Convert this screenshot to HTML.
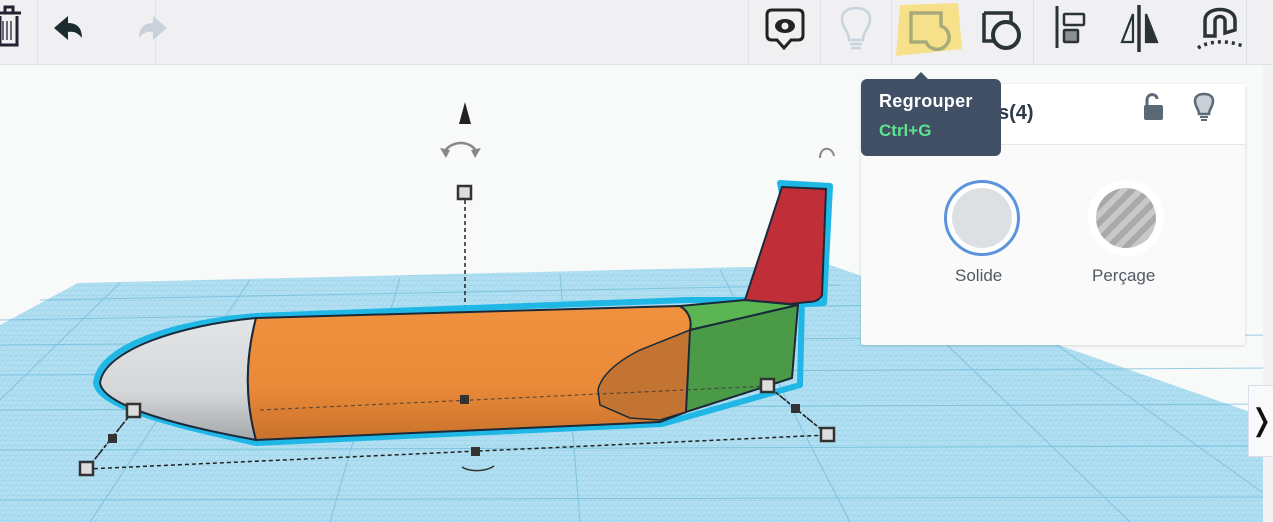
<!DOCTYPE html>
<html><head><meta charset="utf-8"><style>
html,body{margin:0;padding:0;width:1273px;height:522px;overflow:hidden;background:#f8f9f9;font-family:"Liberation Sans",sans-serif}
.tb{position:absolute;left:0;top:0;width:1273px;height:64px;background:#f0f0f2;border-bottom:1px solid #dde2e6}
.sep{position:absolute;top:0;width:1px;height:64px;background:#dde2e6}
.panel{position:absolute;left:861px;top:84px;width:384px;height:261px;background:#fafafa;border-radius:3px;box-shadow:0 1px 3px rgba(0,0,0,.15)}
.ph{position:absolute;left:0;top:0;width:384px;height:60px;border-bottom:1px solid #e3e6e9;background:#fff}
.tip{position:absolute;left:861px;top:79px;width:140px;height:77px;background:#415065;border-radius:6px;color:#fff}
</style></head><body>
<svg width="1273" height="522" style="position:absolute;left:0;top:0">
<defs>
<pattern id="g" width="5" height="5" patternUnits="userSpaceOnUse" patternTransform="skewX(-35)">
<rect width="5" height="5" fill="#b2dff1"/>
<path d="M0 0H5M0 0V5" stroke="#8fcde8" stroke-width="0.8"/>
</pattern>
<linearGradient id="bd" x1="0" y1="0" x2="0" y2="1"><stop offset="0" stop-color="#f0913f"/><stop offset=".6" stop-color="#e98a38"/><stop offset="1" stop-color="#c9722c"/></linearGradient>
<linearGradient id="ns" x1="0" y1="0" x2="0" y2="1"><stop offset="0" stop-color="#e2e4e6"/><stop offset=".6" stop-color="#d5d7d9"/><stop offset="1" stop-color="#a5a8ab"/></linearGradient>
</defs>
<polygon points="0,325 78,283 830,265 1273,420 1273,522 0,522" fill="url(#g)"/>
<g stroke="#6db9d9" stroke-width="1" fill="none" opacity=".7">
<path d="M0,345 L1273,335"/><path d="M0,375 L1273,368"/><path d="M0,410 L1273,404"/><path d="M0,450 L1273,446"/><path d="M0,500 L1273,497"/><path d="M40,300 L840,285"/><path d="M0,320 L900,305"/>
<path d="M120,283 L0,400"/><path d="M250,280 L90,522"/><path d="M400,278 L330,522"/><path d="M560,274 L580,522"/><path d="M720,270 L850,522"/><path d="M880,280 L1130,522"/><path d="M1050,340 L1273,500"/>
</g>
<path d="M87,469 L828,435 L768,386 L134,410 Z" fill="none" stroke="#222" stroke-width="1.5" stroke-dasharray="4,3"/>
<path d="M465,193 L465,400" stroke="#222" stroke-width="1.5" stroke-dasharray="4,3"/>
<path d="M780,183 L830,186 L824,303 L790,305 L745,300 L688,300 L256,316 C180,322 100,345 96,383 C100,410 200,430 256,443 L662,424 L800,385 L802,300 Z" fill="none" stroke="#1fb8e6" stroke-width="6" stroke-linejoin="round"/>
<path d="M256,318 C180,325 104,350 100,383 C104,408 190,428 256,440 C245,400 245,360 256,318Z" fill="url(#ns)" stroke="#1a2a3a" stroke-width="2"/>
<path d="M256,318 L680,306 C690,312 692,322 690,330 L686,412 L660,422 L256,440 C245,400 245,360 256,318Z" fill="url(#bd)" stroke="#1a2a3a" stroke-width="2"/>
<path d="M690,330 L640,350 C610,365 600,380 598,390 L600,405 L630,418 L660,420 L686,412Z" fill="#c47432" stroke="#1a2a3a" stroke-width="1.5"/>
<path d="M680,306 L745,300 L798,305 L690,330 C692,322 690,312 680,306Z" fill="#5ab552" stroke="#1a2a3a" stroke-width="2"/>
<path d="M690,330 L798,305 L792,378 L686,412Z" fill="#4b9a47" stroke="#1a2a3a" stroke-width="2"/>
<path d="M782,187 L826,189 L822,295 C820,300 815,302 808,302 L790,304 L745,300 Z" fill="#c02f38" stroke="#1a2a3a" stroke-width="2"/>
<path d="M260,410 L768,386" stroke="#333" stroke-width="1.2" stroke-dasharray="4,3" opacity=".7"/>
<path d="M134,410 L87,469 M768,386 L828,435" stroke="#222" stroke-width="1.5" stroke-dasharray="3,2"/>
<g fill="#ddd" stroke="#333" stroke-width="2.5">
<rect x="127" y="404" width="13" height="13"/><rect x="80" y="462" width="13" height="13"/><rect x="761" y="379" width="13" height="13"/><rect x="821" y="428" width="13" height="13"/><rect x="458" y="186" width="13" height="13"/>
</g>
<g fill="#333"><rect x="108" y="434" width="9" height="9"/><rect x="791" y="404" width="9" height="9"/><rect x="460" y="395" width="9" height="9"/><rect x="471" y="447" width="9" height="9"/></g>
<path d="M465,102 L471,124 L459,124Z" fill="#222"/>
<path d="M444,152 C452,140 470,140 477,152" fill="none" stroke="#888" stroke-width="2.5"/>
<path d="M440,148 L446,158 L450,150Z M481,148 L475,158 L471,150Z" fill="#888"/>
<path d="M820,158 C820,146 832,146 834,156" fill="none" stroke="#888" stroke-width="2"/>
<path d="M462,467 C470,472 485,472 494,466" fill="none" stroke="#333" stroke-width="1.5"/>
</svg>
<div class="tb">
<div class="sep" style="left:37px"></div><div class="sep" style="left:155px"></div>
<div class="sep" style="left:748px"></div><div class="sep" style="left:820px"></div><div class="sep" style="left:891px"></div><div class="sep" style="left:1033px"></div><div class="sep" style="left:1246px"></div>
<svg width="1273" height="64" style="position:absolute;left:0;top:0">
<g fill="none" stroke="#223" stroke-width="3"><path d="M-2,13 H21 M5,13 V7 H13 V13 M0,16 V45 H17 V16"/><path d="M3,21V40 M7,21V40 M11,21V40" stroke-width="1.3"/></g>
<path d="M54,28 L68,16 L68,23 C78,23 82,29 82,38 C78,33 74,31 68,32 L68,40Z" fill="#1c2b2f"/>
<path d="M167,28 L153,16 L153,23 C143,23 139,29 139,38 C143,33 147,31 153,32 L153,40Z" fill="#c9d2dc"/>
<path d="M772,10 H798 Q803,10 803,15 V35 Q803,40 798,40 H791 L784,48 L777,40 H772 Q767,40 767,35 V15 Q767,10 772,10Z" fill="none" stroke="#222" stroke-width="3"/>
<ellipse cx="785" cy="26" rx="10" ry="7" fill="#222"/><circle cx="785" cy="26" r="3.5" fill="#f0f0f2"/>
<path d="M849,40 C849,31 842,28 842,19 C842,11 849,8 856,8 C863,8 870,11 870,19 C870,28 863,31 863,40Z M850,44H862 M851,48H861" fill="none" stroke="#c8d3dc" stroke-width="2.5"/>
<path d="M900,5 L958,3 L962,49 L896,56Z" fill="#f6e08a"/>
<path d="M911,13 H941 V26 A12,12 0 1 1 926,42 H911Z" fill="none" stroke="#a8aa7a" stroke-width="3.5"/>
<path d="M984,13 H1011 V22 M984,13 V41 H994" fill="none" stroke="#2a3338" stroke-width="3.5"/>
<circle cx="1006" cy="35" r="13" fill="none" stroke="#2a3338" stroke-width="4"/>
<path d="M1057,6V48" stroke="#2a3338" stroke-width="3"/>
<rect x="1064" y="14" width="20" height="11" rx="1" fill="none" stroke="#2a3338" stroke-width="2.5"/>
<rect x="1064" y="30" width="14" height="12" rx="1" fill="#8a9094" stroke="#2a3338" stroke-width="2.5"/>
<path d="M1139,5V52" stroke="#2a3338" stroke-width="3.5"/>
<path d="M1133,14 L1122,42 H1133Z" fill="none" stroke="#2a3338" stroke-width="2.2"/>
<path d="M1146,14 L1157,42 H1146Z" fill="#2a3338" stroke="#2a3338" stroke-width="2.2"/>
<path d="M1205,36 L1205,20 C1205,6 1235,6 1235,20 L1235,30 L1225,33 L1225,21 C1225,15 1215,15 1215,21 L1215,36Z" fill="none" stroke="#2a3338" stroke-width="3.5"/>
<path d="M1198,48 C1210,40 1230,40 1245,47" fill="none" stroke="#2a3338" stroke-width="3.5" stroke-dasharray="3,4"/>
</svg>
</div>
<div class="panel"><div class="ph">
<div style="position:absolute;left:77px;top:18px;font-size:20px;color:#2c3a4a;font-weight:bold">Shapes(4)</div>
<svg width="384" height="60" style="position:absolute;left:0;top:0"><path d="M14,30 L22,23 L30,30" stroke="#2c3a4a" stroke-width="3" fill="none"/>
<rect x="283" y="21" width="19" height="15" rx="2" fill="#5b6876"/><path d="M286,21 V16 C286,9 296,9 296,15" fill="none" stroke="#5b6876" stroke-width="3"/>
<path d="M338,30 C338,25 334,23 334,17 C334,12 338,10 343,10 C348,10 352,12 352,17 C352,23 348,25 348,30Z" fill="#c8d0d8" stroke="#5b6876" stroke-width="2.5"/><path d="M339,33H347M340,36H346" stroke="#5b6876" stroke-width="2"/></svg>
</div>
<div style="position:absolute;left:83px;top:96px;width:70px;height:70px;border-radius:50%;border:3px solid #5b93dc;background:#fff"></div>
<div style="position:absolute;left:91px;top:104px;width:60px;height:60px;border-radius:50%;background:#dde0e3"></div>
<div style="position:absolute;left:227px;top:96px;width:76px;height:76px;border-radius:50%;background:#fff"></div>
<div style="position:absolute;left:235px;top:104px;width:60px;height:60px;border-radius:50%;background:repeating-linear-gradient(135deg,#a9a9a9 0 6px,#c8c8c8 6px 12px)"></div>
<div style="position:absolute;left:94px;top:182px;font-size:17px;color:#4f5a64">Solide</div>
<div style="position:absolute;left:231px;top:182px;font-size:17px;color:#4f5a64">Perçage</div>
</div>
<div class="tip">
<div style="position:absolute;left:52px;top:-7px;width:0;height:0;border-left:8px solid transparent;border-right:8px solid transparent;border-bottom:8px solid #415065"></div>
<div style="position:absolute;left:18px;top:12px;font-size:18px;font-weight:bold;letter-spacing:.3px">Regrouper</div>
<div style="position:absolute;left:18px;top:42px;font-size:17px;font-weight:bold;color:#5de38f">Ctrl+G</div>
</div>
<div style="position:absolute;left:1263px;top:65px;width:10px;height:457px;background:#f2f3f4"></div>
<div style="position:absolute;left:1248px;top:385px;width:25px;height:70px;background:#f8f9f9;border:1px solid #dde;font-size:30px;line-height:70px;text-align:center;color:#111">❭</div>
</body></html>
